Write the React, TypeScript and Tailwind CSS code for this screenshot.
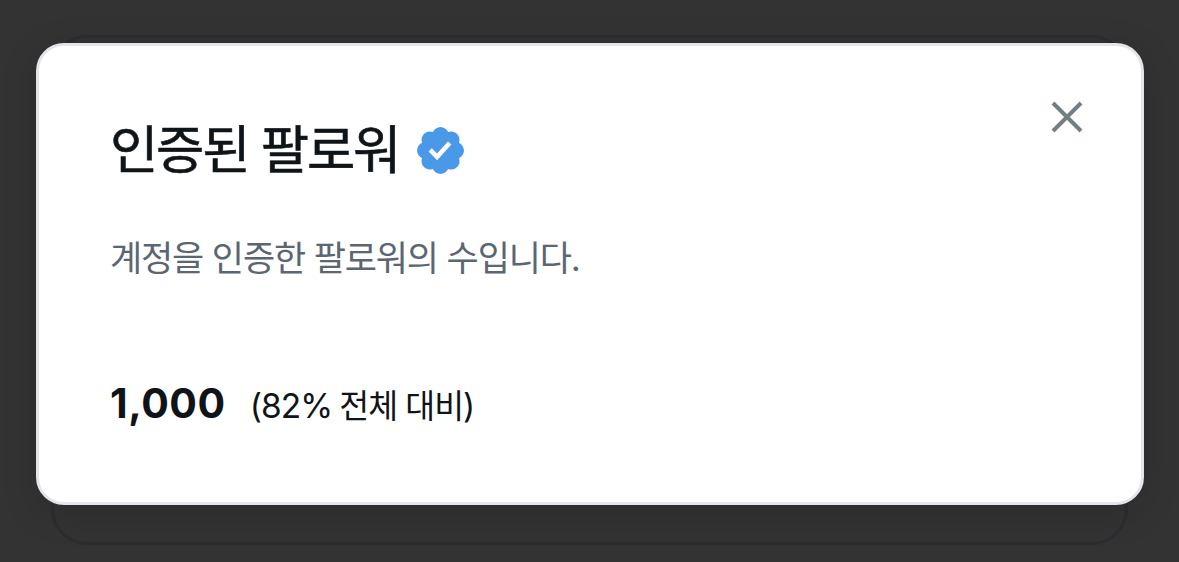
export default function App() {
  return (
    <main className="relative h-[562px] w-[1179px] overflow-hidden bg-[#333333] font-['Inter','Noto_Sans_CJK_KR',sans-serif] text-[#0f1419]">
      <div className="absolute top-[35px] left-[51px] h-[510px] w-[1077px] rounded-[36px] border-[3px] border-[#2b2d30]" />
      <section className="relative mt-[43px] ml-[36px] flex h-[462px] w-[1108px] flex-col items-start rounded-[28px] border-[3px] border-[#e3e5ea] bg-white pt-[65px] pl-[71px] shadow-[0_8px_36px_rgba(0,0,0,0.15)]">
        <header className="flex h-[78px] items-center gap-[14px]">
          <h1 className="text-[52.5px] leading-[78px] font-normal tracking-[-2.2px] whitespace-nowrap [-webkit-text-stroke:0.6px_#0f1419]">인증된 팔로워</h1>
          <svg className="size-[55px]" viewBox="0 0 22 22" fill="#4a99e9">
            <path d="M20.396 11c-.018-.646-.215-1.275-.57-1.816-.354-.54-.852-.972-1.438-1.246.223-.607.27-1.264.14-1.897-.131-.634-.437-1.218-.882-1.687-.47-.445-1.053-.75-1.687-.882-.633-.13-1.29-.083-1.897.14-.273-.587-.704-1.086-1.245-1.44S11.647 1.62 11 1.604c-.646.017-1.273.213-1.813.568s-.969.854-1.24 1.44c-.608-.223-1.267-.272-1.902-.14-.635.13-1.22.436-1.69.882-.445.47-.749 1.055-.878 1.688-.13.633-.08 1.29.144 1.896-.587.274-1.087.705-1.443 1.245-.356.54-.555 1.17-.574 1.817.02.647.218 1.276.574 1.817.356.54.856.972 1.443 1.245-.224.606-.274 1.263-.144 1.896.13.634.433 1.218.877 1.688.47.443 1.054.747 1.687.878.633.132 1.29.084 1.897-.136.274.586.705 1.084 1.246 1.439.54.354 1.17.551 1.816.569.647-.016 1.276-.213 1.817-.567s.972-.854 1.245-1.44c.604.239 1.266.296 1.903.164.636-.132 1.22-.447 1.68-.907.46-.46.776-1.044.908-1.681s.075-1.299-.165-1.903c.586-.274 1.084-.705 1.439-1.246.354-.54.551-1.17.569-1.816zM9.662 14.85l-3.429-3.428 1.293-1.302 2.072 2.072 4.4-4.794 1.347 1.246z" />
          </svg>
        </header>
        <p className="mt-[43px] text-[35px] leading-[52px] font-normal tracking-[-1.15px] whitespace-nowrap text-[#5b6673]">계정을 인증한 팔로워의 수입니다.</p>
        <div className="mt-[93px] flex items-baseline gap-[24px] whitespace-nowrap">
          <strong className="text-[41px] leading-[52px] font-bold tracking-[0.5px]">1,000</strong>
          <span className="text-[33.5px] leading-[52px] font-normal tracking-[-0.9px]">(82%<span className="ml-[7px] text-[32.5px] tracking-[-1px]">전체 대비</span>)</span>
        </div>
        <button aria-label="닫기" className="absolute top-[55px] right-[58px] size-[32px] text-[#737f85]">
          <svg viewBox="0 0 32 32" fill="none" stroke="currentColor" strokeWidth="4"><path d="m2 2 28 28M30 2 2 30" /></svg>
        </button>
      </section>
    </main>
  );
}
